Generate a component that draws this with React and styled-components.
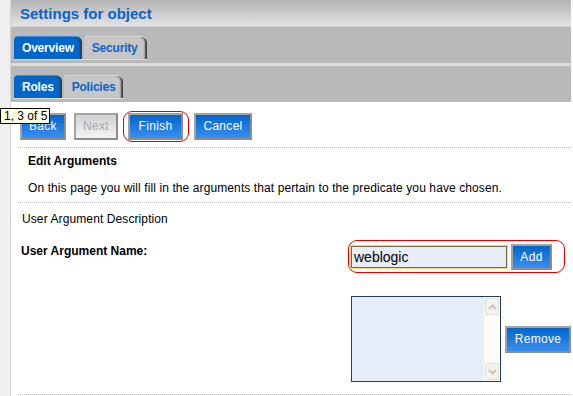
import styled, { createGlobalStyle } from 'styled-components'

// Styles globaux de la page
const GlobalStyle = createGlobalStyle`
   body {
      margin: 0;
      background: #ffffff;
      font-family: 'Liberation Sans', Arial, sans-serif;
      font-size: 12px;
      color: #000;
   }
`

const Page = styled.div`
   position: relative;
   display: flex;
   width: 573px;
   height: 396px;
   overflow: hidden;
`

// Bande grise à gauche
const Rail = styled.div`
   width: 10px;
   flex: none;
   background: #efefef;
   border-right: 1px solid #d4d4d4;
`

const Main = styled.div`
   width: 560px;
   display: flex;
   flex-direction: column;
`

const Header = styled.div`
   height: 27px;
   box-sizing: border-box;
   display: flex;
   align-items: center;
   padding-left: 9px;
   background: linear-gradient(#b4b4b4, #e3e3e3);
   border-bottom: 1px solid #d2d2d2;
   color: #0a64c8;
   font-weight: bold;
   font-size: 15px;
`

const TabBar = styled.div`
   height: ${(p) => p.h}px;
   box-sizing: border-box;
   background: #b9b9b9;
   display: flex;
   align-items: flex-end;
   padding: 0 0 3px 3px;
   border-bottom: ${(p) => (p.sep ? '3px solid #dcdcdc' : 'none')};
`

const TabRow = styled.div`
   display: flex;
   gap: 2px;
   border-bottom: 1px solid #e2e2e2;
`

const Tab = styled.div`
   height: 23px;
   box-sizing: border-box;
   padding: 0 ${(p) => p.pr}px 0 8px;
   display: flex;
   align-items: center;
   font-weight: bold;
   font-size: 12px;
   letter-spacing: -0.2px;
   border-radius: 4px 6px 0 0;
   background: ${(p) => (p.active ? '#0066cc' : '#c6c6c6')};
   color: ${(p) => (p.active ? '#ffffff' : '#0a64c8')};
   border-top: 1px solid ${(p) => (p.active ? '#3d8ce0' : '#dcdcdc')};
   box-shadow: inset -3px 0 2px -1px #3a3a3a;
`

const Content = styled.div`
   display: flex;
   flex-direction: column;
   padding-left: 7px;
`

const ButtonRow = styled.div`
   display: flex;
   align-items: center;
   height: 30px;
   margin-top: 9px;
   padding-left: 2px;
   gap: 8px;
`

const Button = styled.div`
   width: ${(p) => p.w}px;
   height: ${(p) => p.h || 27}px;
   box-sizing: border-box;
   flex: none;
   display: flex;
   align-items: center;
   justify-content: center;
   border: 2px solid #a3a3a3;
   border-right-color: #8c8c8c;
   border-bottom-color: #8c8c8c;
   font-size: 12px;
   letter-spacing: 0.3px;
   color: ${(p) => (p.disabled ? '#a8a8a8' : '#ffffff')};
   background: ${(p) =>
      p.disabled
         ? 'linear-gradient(#d2d2d2, #f4f4f4)'
         : 'linear-gradient(#0066cc, #3b8ef0)'};
`

// Cadre rouge arrondi autour d'un élément mis en évidence
const Highlight = styled.div`
   display: flex;
   align-items: center;
   width: fit-content;
   gap: ${(p) => p.gap || 0}px;
   height: ${(p) => p.h}px;
   box-sizing: border-box;
   border: 1px solid #e00000;
   border-radius: 9px;
   padding: 0 ${(p) => p.pr}px 0 ${(p) => p.pl}px;
   margin: 0 ${(p) => p.mx || 0}px;
`

const Dotted = styled.div`
   border-top: 1px dotted #b8b8b8;
   margin-top: ${(p) => p.mt}px;
`

const Section = styled.div`
   padding: ${(p) => p.pt}px 0 0 ${(p) => p.pl}px;
   display: flex;
   flex-direction: column;
   gap: ${(p) => p.gap || 0}px;
`

const Text = styled.div`
   line-height: 16px;
   font-weight: ${(p) => (p.bold ? 'bold' : 'normal')};
   letter-spacing: ${(p) => (p.bold ? '0' : '0.1px')};
`

const FormGrid = styled.div`
   display: grid;
   grid-template-columns: 330px auto;
   padding-left: 3px;
   margin-top: 13px;
   row-gap: 23px;
   align-items: center;
`

const FieldLabel = styled(Text)`
   align-self: start;
   margin-top: 3px;
`

const Input = styled.div`
   width: 156px;
   height: 22px;
   box-sizing: border-box;
   border: 1px solid #7c6a3c;
   box-shadow: 0 0 0 1px #f3d48a;
   background: #e7eefa;
   font-size: 14px;
   display: flex;
   align-items: center;
   padding-left: 2px;
`

const ListRow = styled.div`
   display: flex;
   align-items: center;
   gap: 4px;
`

const ListBox = styled.div`
   width: 150px;
   height: 86px;
   box-sizing: border-box;
   border: 1px solid #1d3b68;
   background: #e7eefa;
   display: flex;
   justify-content: flex-end;
`

const ScrollBar = styled.div`
   width: 16px;
   background: #fdfdf7;
   display: flex;
   flex-direction: column;
   justify-content: space-between;
   padding: 1px 0;
`

const ScrollArrow = styled.div`
   height: 15px;
   margin: 0 1px;
   background: #f3f2ec;
   border: 1px solid #e2e0d6;
   border-radius: 2px;
   display: flex;
   align-items: center;
   justify-content: center;
`

// Info-bulle jaune en surimpression
const Tooltip = styled.div`
   position: absolute;
   left: 0;
   top: 108px;
   height: 16px;
   box-sizing: border-box;
   padding: 0 2px 0 3px;
   background: #ffffe1;
   border: 1px solid #000;
   font-size: 12px;
   line-height: 14px;
`

function Chevron({ up }) {
   return (
      <svg width="9" height="6" viewBox="0 0 9 6">
         <path
            d={up ? 'M1 5 L4.5 1.5 L8 5' : 'M1 1 L4.5 4.5 L8 1'}
            fill="none"
            stroke="#c8c6bc"
            strokeWidth="2"
         />
      </svg>
   )
}

function App() {
   return (
      <Page>
         <GlobalStyle />
         <Rail />
         <Main>
            <Header>Settings for object</Header>
            <TabBar h={39} sep>
               <TabRow>
                  <Tab active pr={8}>Overview</Tab>
                  <Tab pr={9}>Security</Tab>
               </TabRow>
            </TabBar>
            <TabBar h={36}>
               <TabRow>
                  <Tab active pr={8}>Roles</Tab>
                  <Tab pr={8}>Policies</Tab>
               </TabRow>
            </TabBar>
            <Content>
               <ButtonRow>
                  <Button w={46}>Back</Button>
                  <Button disabled w={44}>Next</Button>
                  <Highlight h={31} pl={4} pr={5} mx={-3}>
                     <Button w={55}>Finish</Button>
                  </Highlight>
                  <Button w={58}>Cancel</Button>
               </ButtonRow>
               <Dotted mt={6} />
               <Section pt={5} pl={10} gap={11}>
                  <Text bold>Edit Arguments</Text>
                  <Text>On this page you will fill in the arguments that pertain to the predicate you have chosen.</Text>
               </Section>
               <Dotted mt={6} />
               <Section pt={8} pl={4}>
                  <Text>User Argument Description</Text>
               </Section>
               <FormGrid>
                  <FieldLabel bold>User Argument Name:</FieldLabel>
                  <Highlight h={33} pl={2} pr={12} gap={4} mx={-3}>
                     <Input>weblogic</Input>
                     <Button w={41} h={26}>Add</Button>
                  </Highlight>
                  <span />
                  <ListRow>
                     <ListBox>
                        <ScrollBar>
                           <ScrollArrow><Chevron up /></ScrollArrow>
                           <ScrollArrow><Chevron /></ScrollArrow>
                        </ScrollBar>
                     </ListBox>
                     <Button w={66}>Remove</Button>
                  </ListRow>
               </FormGrid>
               <Dotted mt={12} />
            </Content>
         </Main>
         <Tooltip>1, 3 of 5</Tooltip>
      </Page>
   )
}

export default App
